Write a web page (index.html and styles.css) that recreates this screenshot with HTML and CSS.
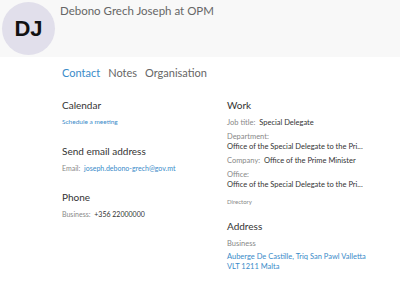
FILE: index.html
```html
<!DOCTYPE html>
<html lang="en">
<head>
  <meta charset="UTF-8">
  <meta name="viewport" content="width=device-width, initial-scale=1.0">
  <title>Contact card</title>
  <link rel="stylesheet" href="styles.css">
</head>
<body>
  <div class="header">
    <div class="avatar">DJ</div>
    <div class="name">Debono Grech Joseph at OPM</div>
  </div>
  <div class="tabs">
    <span class="tab active">Contact</span>
    <span class="tab">Notes</span>
    <span class="tab">Organisation</span>
  </div>
  <div class="columns">
    <div class="column left">
      <div class="section">
        <h2>Calendar</h2>
        <a class="small-link">Schedule a meeting</a>
      </div>
      <div class="section">
        <h2>Send email address</h2>
        <div class="row"><span class="label">Email:</span> <a class="link">joseph.debono-grech@gov.mt</a></div>
      </div>
      <div class="section">
        <h2>Phone</h2>
        <div class="row"><span class="label">Business:</span> <span class="value">+356 22000000</span></div>
      </div>
    </div>
    <div class="column right">
      <div class="section work">
        <h2>Work</h2>
        <div class="row"><span class="label">Job title:</span> <span class="value">Special Delegate</span></div>
        <div class="row tight"><span class="label">Department:</span></div>
        <div class="row value">Office of the Special Delegate to the Pri...</div>
        <div class="row"><span class="label">Company:</span> <span class="value">Office of the Prime Minister</span></div>
        <div class="row tight"><span class="label">Office:</span></div>
        <div class="row value">Office of the Special Delegate to the Pri...</div>
        <div class="directory">Directory</div>
      </div>
      <div class="section">
        <h2>Address</h2>
        <div class="row tight"><span class="label">Business</span></div>
        <a class="link address">Auberge De Castille, Triq San Pawl Valletta<br>VLT 1211 Malta</a>
      </div>
    </div>
  </div>
</body>
</html>
```

FILE: styles.css
```css
body {
  margin: 0;
  font-family: Lato, sans-serif;
  background: #fff;
  color: #333;
}

.header {
  background: #f8f8f8;
  height: 57px;
  display: flex;
  padding-left: 2px;
}

.avatar {
  width: 53px;
  height: 53px;
  margin-top: 2px;
  border-radius: 50%;
  background: #e1dfeb;
  color: #111;
  font-family: "Liberation Sans", sans-serif;
  font-weight: bold;
  font-size: 22px;
  display: flex;
  align-items: center;
  justify-content: center;
}

.name {
  margin-left: 5px;
  margin-top: 3px;
  font-size: 11.5px;
  line-height: 16px;
  color: #666;
}

.tabs {
  display: flex;
  gap: 8px;
  padding: 8px 0 0 62px;
  font-size: 11px;
  line-height: 15px;
  color: #666;
}

.tab.active {
  color: #3a8bc9;
}

.columns {
  display: flex;
  padding: 19px 0 0 62px;
}

.column {
  width: 165px;
}

.section {
  margin-bottom: 18px;
}

.section.work {
  margin-bottom: 14px;
}

h2 {
  font-size: 10px;
  line-height: 12px;
  font-weight: normal;
  color: #333;
  margin: 0 0 6px;
}

.right h2 {
  margin-bottom: 7px;
}

.small-link {
  display: block;
  font-size: 6.5px;
  line-height: 10px;
  color: #3a8bc9;
}

.row {
  font-size: 7.5px;
  line-height: 10px;
  margin-bottom: 4px;
  white-space: nowrap;
}

.left .row,
.left .link {
  font-size: 7px;
}

.row.tight {
  margin-bottom: 0;
}

.label {
  color: #888;
  margin-right: 2px;
}

.value {
  color: #333;
}

.link {
  color: #3a8bc9;
  font-size: 7.5px;
}

.directory {
  font-size: 6px;
  line-height: 8px;
  color: #888;
  margin-top: 8px;
}

.address {
  display: block;
  line-height: 10px;
  margin-top: 3px;
}
```
